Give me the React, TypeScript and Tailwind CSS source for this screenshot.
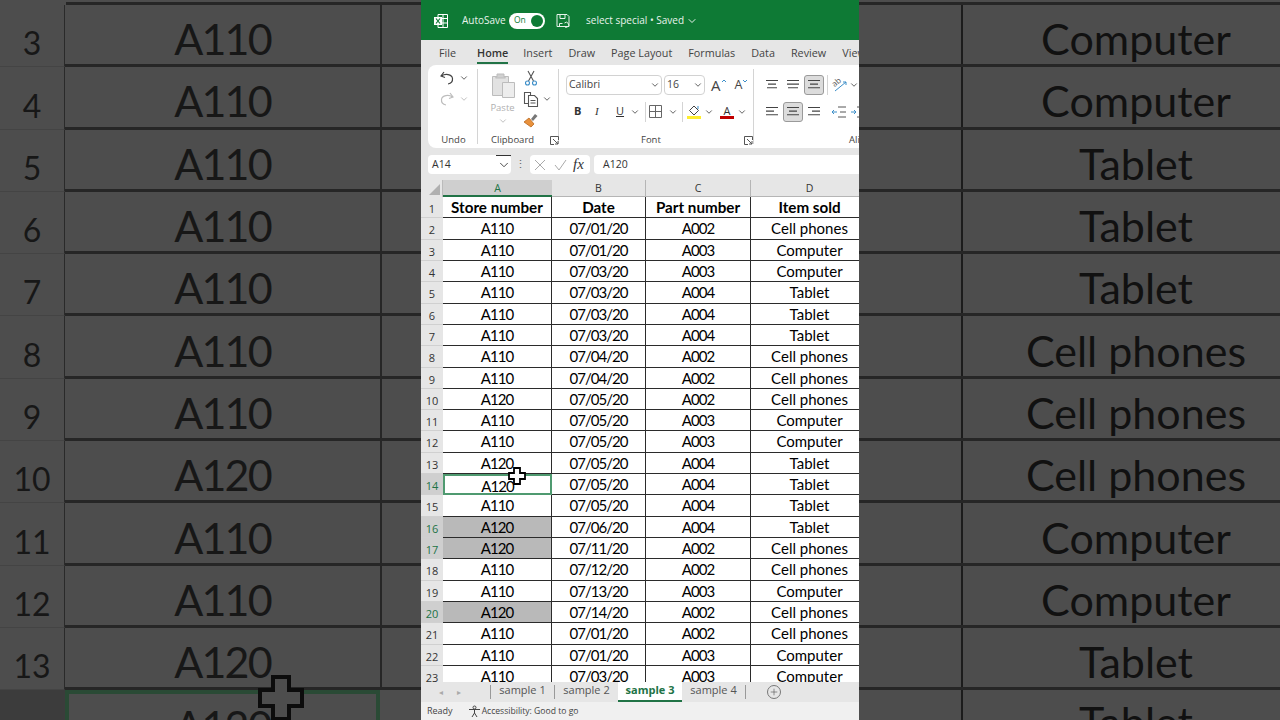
import { ChevronDown, Plus } from 'lucide-react';

const font = "font-['Open_Sans',sans-serif]";
const cellFont = "font-['Lato',sans-serif]";

const sheetRows: [string, string, string, string][] = [
  ['A110', '07/01/20', 'A002', 'Cell phones'],
  ['A110', '07/01/20', 'A003', 'Computer'],
  ['A110', '07/03/20', 'A003', 'Computer'],
  ['A110', '07/03/20', 'A004', 'Tablet'],
  ['A110', '07/03/20', 'A004', 'Tablet'],
  ['A110', '07/03/20', 'A004', 'Tablet'],
  ['A110', '07/04/20', 'A002', 'Cell phones'],
  ['A110', '07/04/20', 'A002', 'Cell phones'],
  ['A120', '07/05/20', 'A002', 'Cell phones'],
  ['A110', '07/05/20', 'A003', 'Computer'],
  ['A110', '07/05/20', 'A003', 'Computer'],
  ['A120', '07/05/20', 'A004', 'Tablet'],
  ['A120', '07/05/20', 'A004', 'Tablet'],
  ['A110', '07/05/20', 'A004', 'Tablet'],
  ['A120', '07/06/20', 'A004', 'Tablet'],
  ['A120', '07/11/20', 'A002', 'Cell phones'],
  ['A110', '07/12/20', 'A002', 'Cell phones'],
  ['A110', '07/13/20', 'A003', 'Computer'],
  ['A120', '07/14/20', 'A002', 'Cell phones'],
  ['A110', '07/01/20', 'A002', 'Cell phones'],
  ['A110', '07/01/20', 'A003', 'Computer'],
  ['A110', '07/03/20', 'A003', 'Computer'],
];

const leftRows = [
  ['3', 'A110'], ['4', 'A110'], ['5', 'A110'], ['6', 'A110'], ['7', 'A110'], ['8', 'A110'],
  ['9', 'A110'], ['10', 'A120'], ['11', 'A110'], ['12', 'A110'], ['13', 'A120'],
];

const rightRows = [
  'Computer', 'Computer', 'Tablet', 'Tablet', 'Tablet', 'Cell phones', 'Cell phones', 'Cell phones',
  'Computer', 'Computer', 'Tablet',
];

const marked = [16, 17, 20];

function Caret({ gray }: { gray?: boolean }) {
  return <ChevronDown size={10} strokeWidth={2} className={gray ? 'text-[#b5b5b5]' : 'text-[#444]'} />;
}

function Launcher() {
  return (
    <svg width="9" height="9" viewBox="0 0 9 9" fill="none" stroke="#555" strokeWidth="1">
      <path d="M8.5 4V.5H.5v8H4" />
      <path d="M3 3l5 5M8 5v3H5" />
    </svg>
  );
}

function Lines({ rows, active }: { rows: [number, number][]; active?: boolean }) {
  return (
    <div className={`flex h-[20px] w-[20px] shrink-0 items-center justify-center rounded-[3px] ${active ? 'border border-[#9a9a9a] bg-[#dcdcdc]' : ''}`}>
      <svg width="16" height="16" viewBox="0 0 16 16" stroke="#444" strokeWidth="1.1">
        {rows.map(([x1, x2], i) => (
          <path key={i} d={`M${x1} ${3.5 + i * 3.6}H${x2}`} />
        ))}
      </svg>
    </div>
  );
}

function Ribbon() {
  return (
    <div className={`flex h-[83px] w-[431px] overflow-hidden rounded-l-lg bg-white text-[#444] ${font}`}>
      <div className="flex w-[50px] shrink-0 flex-col border-r border-[#d4d4d4] my-[4px]">
        <div className="flex items-center gap-[4px] pl-[11px] h-[18px]">
          <svg width="16" height="16" viewBox="0 0 16 16" fill="none" stroke="#444" strokeWidth="1.2">
            <path d="M5 2L2 6l4 1.5" />
            <path d="M2.5 6C6 3.5 13 4 13.500 8.500c.3 3-2 5-4.500 5.500" />
          </svg>
          <Caret />
        </div>
        <div className="mt-[2px] flex items-center gap-[4px] pl-[11px] h-[20px]">
          <svg width="16" height="16" viewBox="0 0 16 16" fill="none" stroke="#bdbdbd" strokeWidth="1.2">
            <path d="M11 2l3 4-4 1.500" />
            <path d="M13.500 6C10 3.500 3 4 2.500 8.500c-.3 3 2 5 4.500 5.500" />
          </svg>
          <Caret gray />
        </div>
        <div className="mt-auto -mb-[3px] pl-[2px] text-center text-[9.5px] leading-[14px]">Undo</div>
      </div>

      <div className="flex w-[81px] shrink-0 flex-col border-r border-[#d4d4d4] my-[4px]">
        <div className="flex">
          <div className="flex w-[47px] flex-col items-center pl-[2px]">
            <svg width="24" height="26" viewBox="0 0 24 26" className="mt-[3px]" fill="#e2e2e2" stroke="#bcbcbc">
              <path d="M1.500 4.500h16v19h-16z" />
              <path d="M6 4.500V2h7v2.500l1.500 1.500h-10z" fill="#d0d0d0" />
              <path d="M11.500 10.500h12v15h-12z" fill="#ededed" />
            </svg>
            <span className="mt-[3px] text-[9.5px] leading-[13px] text-[#b0b0b0]">Paste</span>
            <span className="mt-[2px]"><Caret gray /></span>
          </div>
          <div className="-ml-[2px] flex flex-col pt-[1px] gap-[5px]">
            <svg width="16" height="16" viewBox="0 0 16 16" fill="none" strokeWidth="1.1">
              <path d="M5 1l5.500 10M11 1L5.500 11" stroke="#555" />
              <circle cx="4.500" cy="13" r="2" stroke="#3d8fc9" />
              <circle cx="11.500" cy="13" r="2" stroke="#3d8fc9" />
            </svg>
            <div className="flex items-center gap-[3px]">
              <svg width="16" height="16" viewBox="0 0 16 16" fill="#fff" stroke="#555" strokeWidth="1.1">
                <path d="M1.500 1.500h6v11h-6z" />
                <path d="M5.500 4.500h6l3 3v8h-9z" />
                <path d="M7.500 9.500h5M7.500 12h5" />
              </svg>
              <Caret />
            </div>
            <svg width="16" height="16" viewBox="0 0 16 16">
              <path d="M1 10l5-4 5 6-3 3z" fill="#e8913c" stroke="#b9681f" strokeWidth=".8" />
              <path d="M8 7l4-5 2.500 2-4.500 5z" fill="#777" />
            </svg>
          </div>
        </div>
        <div className="mt-auto -mb-[3px] flex items-center text-[9.5px] leading-[14px]">
          <span className="ml-[13px]">Clipboard</span>
          <span className="ml-[16px]"><Launcher /></span>
        </div>
      </div>

      <div className="flex w-[195px] shrink-0 flex-col border-r border-[#d4d4d4] my-[4px]">
        <div className="flex items-center pl-[7px] pt-[6px]">
          <div className="flex h-[20px] w-[96px] items-center justify-between rounded-[4px] border border-[#d2d2d2] pl-[2px] pr-[1px] text-[10.5px]">
            Calibri <Caret />
          </div>
          <div className="ml-[2px] flex h-[20px] w-[41px] items-center justify-between rounded-[4px] border border-[#d2d2d2] pl-[2px] pr-[1px] text-[10.5px]">
            16 <Caret />
          </div>
          <span className="ml-[6px] text-[15px] leading-none">A</span>
          <svg width="6" height="6" viewBox="0 0 6 6" fill="none" stroke="#3d8fc9" className="mb-[8px]"><path d="M1 4l2-2 2 2" /></svg>
          <span className="ml-[8px] text-[12.5px] leading-none">A</span>
          <svg width="6" height="6" viewBox="0 0 6 6" fill="none" stroke="#3d8fc9" className="mb-[8px]"><path d="M1 2l2 2 2-2" /></svg>
        </div>
        <div className="flex items-center pl-[15px] pt-[6px] h-[27px] text-[#333]">
          <span className="w-[21px] text-[11px] font-bold">B</span>
          <span className="w-[21px] text-[11px] italic font-['Liberation_Serif',serif]">I</span>
          <span className="w-[14px] text-[11px] underline">U</span>
          <Caret />
          <span className="ml-[5px] h-[20px] w-px bg-[#d4d4d4]" />
          <svg width="14" height="14" viewBox="0 0 14 14" fill="none" stroke="#666" className="ml-[3px]">
            <path d="M.5.5h12v12H.5zM6.500.5v12M.5 6.500h12" />
          </svg>
          <span className="ml-[5px]"><Caret /></span>
          <span className="ml-[4px] h-[20px] w-px bg-[#d4d4d4]" />
          <div className="ml-[4px] flex flex-col items-center">
            <svg width="13" height="11" viewBox="0 0 13 11" fill="none" stroke="#444">
              <path d="M6 1l4.500 4.500L6 10 1.500 5.500z" />
              <path d="M10 1v3" stroke="#3d8fc9" />
            </svg>
            <span className="h-[3px] w-[14px] bg-[#ffee2e]" />
          </div>
          <span className="ml-[3px]"><Caret /></span>
          <div className="ml-[6px] flex flex-col items-center">
            <span className="text-[11px] leading-[11px]">A</span>
            <span className="h-[3px] w-[14px] bg-[#c00000]" />
          </div>
          <span className="ml-[3px]"><Caret /></span>
        </div>
        <div className="mt-auto -mb-[3px] flex items-center text-[9.5px] leading-[14px]">
          <span className="ml-[82px]">Font</span>
          <span className="ml-[83px]"><Launcher /></span>
        </div>
      </div>

      <div className="mb-[1px] mt-[4px] flex flex-1 flex-col overflow-hidden">
        <div className="flex items-center pl-[8px] pt-[6px] gap-[1px]">
          <Lines rows={[[2, 14], [4, 12], [3, 13]]} />
          <Lines rows={[[2, 14], [2, 14], [3, 13]]} />
          <Lines rows={[[2, 14], [4, 12], [2, 14]]} active />
          <span className="ml-[2px] h-[20px] w-px bg-[#d4d4d4]" />
          <svg width="16" height="16" viewBox="0 0 16 16" fill="none" className="ml-[3px] shrink-0">
            <text x="1" y="8" fontSize="8" fill="#555" transform="rotate(-40 5 7)">ab</text>
            <path d="M3 14L14 5M11 5h3v3" stroke="#3d8fc9" />
          </svg>
          <Caret />
        </div>
        <div className="flex items-center pl-[8px] pt-[6px] h-[27px] gap-[1px]">
          <Lines rows={[[2, 14], [2, 10], [2, 14]]} />
          <Lines rows={[[2, 14], [4, 12], [2, 14]]} active />
          <Lines rows={[[2, 14], [6, 14], [2, 14]]} />
          <span className="ml-[2px] h-[20px] w-px bg-[#d4d4d4]" />
          <svg width="16" height="16" viewBox="0 0 16 16" fill="none" stroke="#555" className="ml-[3px] shrink-0">
            <path d="M7 3h8M9 8h6M7 13h8" />
            <path d="M1 8h5M3 6L1 8l2 2" stroke="#3d8fc9" />
          </svg>
          <svg width="16" height="16" viewBox="0 0 16 16" fill="none" stroke="#555" className="ml-[2px] shrink-0">
            <path d="M7 3h8M9 8h6M7 13h8" />
            <path d="M1 8h5M4 6l2 2-2 2" stroke="#3d8fc9" />
          </svg>
        </div>
        <div className="mt-auto text-[9.5px] leading-[14px] pl-[95px] whitespace-nowrap">Alignment</div>
      </div>
    </div>
  );
}

function FormulaBar() {
  return (
    <div className={`flex h-[32px] w-full items-start bg-[#e6e6e6] pt-[7px] pl-[7px] text-[10.5px] text-[#333] ${font}`}>
      <div className="flex h-[19px] w-[83px] items-center justify-between rounded-[4px] bg-white pl-[4px]">
        A14
        <div className="flex h-[19px] w-[15px] items-center justify-center border-t border-[#333]">
          <ChevronDown size={14} strokeWidth={1.5} />
        </div>
      </div>
      <span className="w-[19px] text-center text-[#666] leading-[18px]">⋮</span>
      <div className="flex h-[19px] w-[60px] items-center rounded-[4px] bg-white pl-[4px]">
        <svg width="12" height="12" viewBox="0 0 12 12" fill="none" stroke="#aaa"><path d="M1 1l10 10M11 1L1 11" /></svg>
        <svg width="13" height="12" viewBox="0 0 13 12" fill="none" stroke="#aaa" className="ml-[8px]"><path d="M1 6l4 5 7-10" /></svg>
        <span className="ml-[6px] font-['Liberation_Serif',serif] text-[15px] italic leading-none">fx</span>
      </div>
      <div className="ml-[4px] flex h-[19px] flex-1 items-center rounded-l-[4px] bg-white pl-[9px]">A120</div>
    </div>
  );
}

function ColumnHeader() {
  const cols = [
    ['B', 'w-[94px]'],
    ['C', 'w-[105px]'],
    ['D', 'w-[118px]'],
  ];
  return (
    <div className={`flex h-[17px] bg-[#e6e6e6] text-[10.5px] leading-[16px] text-[#333] ${font}`}>
      <div className="flex w-[22px] shrink-0 items-end justify-end border-r border-[#bbb] pr-[2px] pb-[2px]">
        <div className="h-0 w-0 border-b-[11px] border-l-[11px] border-b-[#b0b0b0] border-l-transparent" />
      </div>
      <div className="w-[109px] shrink-0 border-b-2 border-[#217346] bg-[#cfcfcf] text-center text-[#217346]">A</div>
      {cols.map(([label, width]) => (
        <div key={label} className={`${width} shrink-0 border-r border-b border-[#b5b5b5] text-center`}>{label}</div>
      ))}
    </div>
  );
}

function SheetRow({ n, values, bold }: { n: number; values: string[]; bold?: boolean }) {
  const isActive = n === 14;
  const isMarked = marked.includes(n);
  return (
    <div className={`flex h-[21.32px] leading-[20px] text-black ${cellFont} ${bold ? 'text-[15.2px] font-bold' : 'text-[15px]'}`}>
      <div
        className={`w-[22px] shrink-0 border-b border-[#d0d0d0] pt-[2px] text-center text-[11px] font-normal ${font} ${
          isActive || isMarked ? 'bg-[#cfcfcf] text-[#217346]' : 'bg-[#e6e6e6] text-[#333]'
        }`}
      >
        {n}
      </div>
      {values.map((v, i) => (
        <div
          key={i}
          className={`shrink-0 text-center ${['w-[109px]', 'w-[94px]', 'w-[105px]', 'w-[118px]'][i]} ${
            i === 0 && isActive
              ? 'border-2 border-[#4f9a70]'
              : `border-r border-b border-[#2b2b2b] ${i === 0 && isMarked ? 'bg-[#b9b9b9]' : 'bg-white'}`
          }`}
        >
          <span className={!bold && i < 3 ? 'tracking-[-1px]' : ''}>{v}</span>
        </div>
      ))}
    </div>
  );
}

function SheetTabs() {
  return (
    <div className={`flex h-[20px] items-center bg-[#e6e6e6] text-[11px] text-[#555] ${font}`}>
      <span className="ml-[18px] text-[8px] text-[#aaa]">◂</span>
      <span className="ml-[14px] text-[8px] text-[#aaa]">▸</span>
      <span className="ml-[29px] h-[14px] w-px bg-[#999]" />
      <span className="w-[63px] pb-[3px] text-center">sample 1</span>
      <span className="h-[14px] w-px bg-[#999]" />
      <span className="w-[63px] pb-[3px] text-center">sample 2</span>
      <span className="flex h-[20px] w-[64px] items-center justify-center border-b-2 border-[#217346] bg-white pb-[2px] font-bold text-[#217346]">sample 3</span>
      <span className="w-[63px] pb-[3px] text-center">sample 4</span>
      <span className="h-[14px] w-px bg-[#999]" />
      <span className="ml-[21px] flex h-[14px] w-[14px] items-center justify-center rounded-full border border-[#777]">
        <Plus size={10} strokeWidth={1.5} />
      </span>
    </div>
  );
}

function DarkCursor() {
  return (
    <svg width="46" height="46" viewBox="0 0 46 46" className="absolute left-[258px] top-[675px]">
      <path d="M15 2h16v13h13v16H31v13H15V31H2V15h13z" fill="#4d4d4d" stroke="#0c0c0c" strokeWidth="4" />
    </svg>
  );
}

function LeftPanel() {
  return (
    <div className={`relative h-[720px] w-[421px] shrink-0 overflow-hidden bg-[#4d4d4d] text-[43px] leading-none text-[#171717] ${cellFont}`}>
      <div className="h-[5px] border-b-[3px] border-[#262626] ml-[66px]" />
      {leftRows.map(([n, v]) => (
        <div key={n} className="flex h-[62.3px]">
          <div className="flex w-[65px] shrink-0 items-end justify-center border-r border-[#2a2a2a] border-b border-b-[#444] pb-[7px] text-[32px] leading-none">{n}</div>
          <div className="flex w-[317px] shrink-0 items-center justify-center border-b-[3px] border-r-2 border-[#262626] pt-[8px] tracking-[-1.8px]">{v}</div>
          <div className="flex-1 border-b-[3px] border-[#262626]" />
        </div>
      ))}
      <div className="flex h-[40px]">
        <div className="w-[65px] shrink-0 bg-[#3c3c3c]" />
        <div className="flex h-[40px] w-[315px] shrink-0 justify-center border-[4px] border-b-0 border-[#2a4a35] pt-[10px] tracking-[-1.8px]">A120</div>
      </div>
      <DarkCursor />
    </div>
  );
}

function RightPanel() {
  return (
    <div className={`h-[720px] flex-1 overflow-hidden bg-[#4d4d4d] text-[43px] leading-none text-[#111] ${cellFont}`}>
      <div className="h-[5px] border-b-[3px] border-[#262626]" />
      {rightRows.map((v, i) => (
        <div key={i} className="flex h-[62.3px] border-b-[3px] border-[#262626]">
          <div className="w-[104px] shrink-0 border-r-2 border-[#1c1c1c]" />
          <div className="flex w-[346px] shrink-0 items-center justify-center pt-[8px] whitespace-nowrap">{v}</div>
        </div>
      ))}
      <div className="flex h-[40px]">
        <div className="w-[104px] shrink-0 border-r-2 border-[#1c1c1c]" />
        <div className="w-[346px] shrink-0 pt-[10px] text-center">Tablet</div>
      </div>
    </div>
  );
}

export default function App() {
  return (
    <div className="flex h-[720px] w-[1280px] overflow-hidden">
      <LeftPanel />

      <div className="relative flex h-[720px] w-[438px] shrink-0 flex-col overflow-hidden bg-[#e6e6e6]">
        <div className={`flex h-[40px] shrink-0 items-center bg-[#0e7a35] pt-[1px] text-[10px] text-[#e8f3ec] ${font}`}>
          <svg width="16" height="16" viewBox="0 0 16 16" className="ml-[12px]" fill="none" stroke="#fff" strokeWidth="1">
            <path d="M5 1.500h9.500v13H5zM5 5.500h9.500M5 10h9.500M10 1.500v13" />
            <rect x="1" y="4" width="8" height="8" fill="#fff" stroke="none" />
            <path d="M3 5.500l4 5M7 5.500l-4 5" stroke="#0e7a35" strokeWidth="1.200" />
          </svg>
          <span className="ml-[13px] w-[42px]">AutoSave</span>
          <div className="ml-[5px] flex h-[16px] w-[36px] items-center justify-between rounded-full bg-white pl-[5px] pr-[2px] text-[8.5px] text-[#0e7a35]">
            On
            <span className="h-[12px] w-[12px] rounded-full bg-[#0e7a35]" />
          </div>
          <svg width="14" height="16" viewBox="0 0 14 16" fill="none" stroke="#e8f3ec" className="ml-[11px]">
            <path d="M1 1.500h10l2 2v10H1z" />
            <path d="M4 1.500v4h5v-4M3.500 13.500v-3h3" />
            <path d="M8 13a2.500 2.500 0 1 0 .500-3" />
          </svg>
          <span className="ml-[16px]">select special • Saved</span>
          <ChevronDown size={12} className="ml-[2px]" />
        </div>

        <div className={`flex h-[25px] shrink-0 items-start whitespace-nowrap bg-[#e6e6e6] pt-[5px] text-[10.8px] leading-[16px] text-[#444] ${font}`}>
          <span className="ml-[18px]">File</span>
          <span className="ml-[21px] h-[19px] border-b-2 border-[#217346] font-semibold text-[#333]">Home</span>
          <span className="ml-[15px]">Insert</span>
          <span className="ml-[16px]">Draw</span>
          <span className="ml-[16px]">Page Layout</span>
          <span className="ml-[16px]">Formulas</span>
          <span className="ml-[16px]">Data</span>
          <span className="ml-[16px]">Review</span>
          <span className="ml-[16px]">View</span>
        </div>

        <div className="flex h-[83px] shrink-0 pl-[7px]">
          <Ribbon />
        </div>
        <FormulaBar />
        <ColumnHeader />
        <div className="h-[485px] shrink-0 overflow-hidden bg-white">
          <SheetRow n={1} values={['Store number', 'Date', 'Part number', 'Item sold']} bold />
          {sheetRows.map((r, i) => (
            <SheetRow key={i} n={i + 2} values={r} />
          ))}
        </div>
        <SheetTabs />
        <div className={`flex h-[18px] shrink-0 items-center bg-[#f0f0f0] text-[8.6px] text-[#444] ${font}`}>
          <span className="ml-[6px] text-[9px]">Ready</span>
          <svg width="13" height="13" viewBox="0 0 13 13" fill="none" stroke="#444" className="ml-[15px]">
            <circle cx="6.500" cy="2.500" r="1.500" />
            <path d="M1 4.500h11M6.500 5v3M6.500 8L4 12M6.500 8l2.500 4" />
          </svg>
          <span className="ml-[1px]">Accessibility: Good to go</span>
        </div>

        <svg width="18" height="18" viewBox="0 0 18 18" className="absolute left-[87px] top-[467px]">
          <path d="M6 1h6v5h5v6h-5v5H6v-5H1V6h5z" fill="#fff" stroke="#000" strokeWidth="1.800" />
        </svg>
      </div>

      <RightPanel />
    </div>
  );
}
